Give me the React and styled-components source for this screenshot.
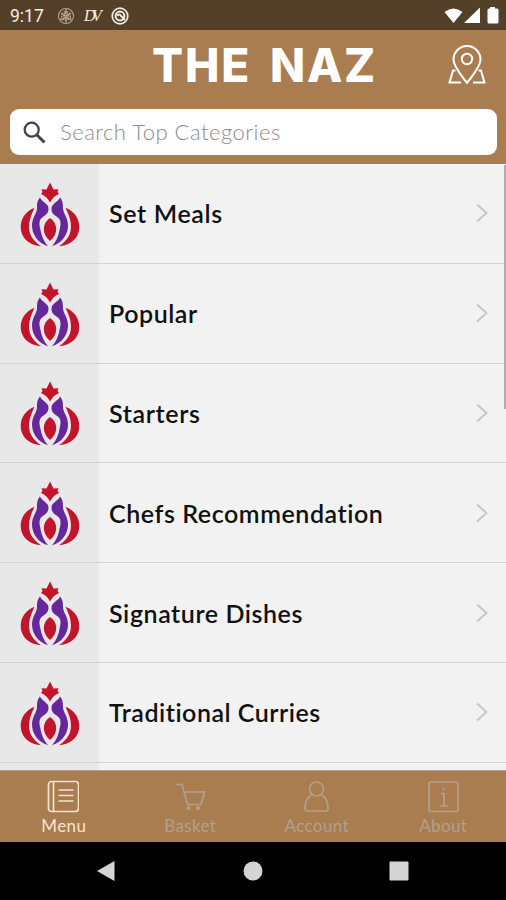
import React from "react";
import styled, { createGlobalStyle } from "styled-components";

const categories = [
  { name: "Set Meals", spacing: 0.65 },
  { name: "Popular", spacing: 0.55 },
  { name: "Starters", spacing: 0.65 },
  { name: "Chefs Recommendation", spacing: 0.57 },
  { name: "Signature Dishes", spacing: 0.57 },
  { name: "Traditional Curries", spacing: 0.52 },
  { name: "", spacing: 0 },
];

const GlobalStyle = createGlobalStyle`
  * {
    box-sizing: border-box;
  }
  body {
    margin: 0;
    font-family: Lato, sans-serif;
  }
`;

const Logo = () => (
  <svg width="60" height="68" viewBox="0 0 60 68">
    <g fill="#c4142b">
      <path d="M30 0.500 L33.500 7.500 L38.500 7.300 L37.500 10 L39 12 C35 13.500 32 16.500 30 20.500 C28 16.500 25 13.500 21 12 L22.500 10 L21.500 7.300 L26.500 7.500Z" />
      <path d="M14.500 25.700 C5 29.500 0.700 37 0.700 45 C0.700 55 8 63 21 64.300 C12 58 9 52 9 44.500 C9 38 11.500 32 14.500 25.700Z" />
      <path d="M45.500 25.700 C55 29.500 59.300 37 59.300 45 C59.300 55 52 63 39 64.300 C48 58 51 52 51 44.500 C51 38 48.500 32 45.500 25.700Z" />
      <path d="M30 36 C22 41 21.500 52 30 59 C38.500 52 38 41 30 36Z" />
    </g>
    <g fill="#67279c">
      <path d="M20 15.500 C21.500 19 25 20 28 24 C29.500 29 27.500 32 23.500 34.500 C18.500 37.500 19 42 20.500 48 C21.500 54 24 60 28 64.300 C17.500 61 11.800 52 12 43 C12.200 35 17 31.500 17 26 C17 21 17.500 18.500 20 15.500Z" />
      <path d="M40 15.500 C38.500 19 35 20 32 24 C30.500 29 32.500 32 36.500 34.500 C41.500 37.500 41 42 39.500 48 C38.500 54 36 60 32 64.300 C42.500 61 48.200 52 48 43 C47.800 35 43 31.500 43 26 C43 21 42.500 18.500 40 15.500Z" />
    </g>
  </svg>
);

const MapPin = () => (
  <svg width="38" height="40" viewBox="0 0 38 40" fill="none" stroke="#fff" strokeWidth="2">
    <path d="M19 38 C14 31 5.500 22 5.500 14.500 A13.500 13.500 0 0 1 32.500 14.500 C32.500 22 24 31 19 38Z" />
    <circle cx="19" cy="14" r="5.200" />
    <path d="M7.500 25.500 H5 L1.500 37.500 H13 M30.500 25.500 H33 L36.500 37.500 H25" />
  </svg>
);

const tabIcons = {
  Menu: (
    <>
      <rect x="1.500" y="1.500" width="30" height="30" rx="3" />
      <path d="M6.500 2 V31 M11.500 10 H26.500 M11.500 15.500 H26.500 M11.500 21 H26.500" />
    </>
  ),
  Basket: (
    <>
      <path d="M1.500 4.500 H8 L13.500 24.500 H27 L30.500 12 H10.500" />
      <circle cx="14.500" cy="28" r="1.200" />
      <circle cx="24" cy="28" r="1.200" />
    </>
  ),
  Account: (
    <>
      <circle cx="16.500" cy="9" r="7" />
      <path d="M11.500 15 C7 17.500 5 22 5 28.500 Q5 31 7.500 31 H25.500 Q28 31 28 28.500 C28 22 26 17.500 21.500 15" />
    </>
  ),
  About: (
    <>
      <rect x="2" y="2" width="29" height="29.500" rx="2" />
      <path d="M14 13.500 H17 V26 M13 26 H20.500 M16.500 7.500 V10" />
    </>
  ),
};

const App = () => (
  <Screen>
    <GlobalStyle />
    <StatusBar>
      <Time>9:17</Time>
      <StatusIcons>
        <svg width="18" height="18" viewBox="0 0 18 18" fill="none" stroke="#b3a496" strokeWidth="1.1">
          <circle cx="9" cy="9" r="7.500" />
          <circle cx="9" cy="9" r="4.500" strokeDasharray="2 1" />
          <path d="M9 2 V16 M3 12 H15 M4 6 L14 13 M14 6 L4 13 M9 4 L6 9 H12Z" />
        </svg>
        <Initials>DV</Initials>
        <svg width="18" height="18" viewBox="0 0 18 18" fill="none" stroke="#f3ece6">
          <circle cx="9" cy="9" r="7.800" strokeWidth="1.700" />
          <circle cx="9" cy="9" r="4.400" strokeWidth="2" />
          <path d="M6 8.500 Q9 6.500 10 9 L14 13" strokeWidth="2" />
        </svg>
      </StatusIcons>
      <svg width="56" height="18" viewBox="0 0 56 18" fill="#fff">
        <path d="M0.500 5 Q9.500 -2 18.500 5 L9.500 16Z" />
        <path d="M20 16 L36 0.500 V16Z" />
        <path d="M46 0 H51 V1.500 H53 Q54.500 1.500 54.500 3 V15 Q54.500 16.500 53 16.500 H45 Q43.500 16.500 43.500 15 V3 Q43.500 1.500 45 1.500 H46Z" />
      </svg>
    </StatusBar>

    <Header>
      <TitleRow>
        <Title>THE NAZ</Title>
        <MapPin />
      </TitleRow>
      <Search>
        <svg width="23" height="23" viewBox="0 0 23 23" fill="none" stroke="#454545">
          <circle cx="8.700" cy="8.700" r="7" strokeWidth="2.300" />
          <path d="M14 14 L21.500 21.500" strokeWidth="3" />
        </svg>
        <Placeholder>Search Top Categories</Placeholder>
      </Search>
    </Header>

    <List>
      {categories.map((c, i) => (
        <Row key={i}>
          <Thumb>
            <Logo />
          </Thumb>
          <Name $spacing={c.spacing}>{c.name}</Name>
          <svg width="14" height="20" viewBox="0 0 14 20" fill="none" stroke="#c5c5c5" strokeWidth="1.8">
            <path d="M2 1.500 L11.500 10 L2 18.500" />
          </svg>
        </Row>
      ))}
      <ScrollThumb />
    </List>

    <TabBar>
      {Object.keys(tabIcons).map((name) => (
        <Tab key={name} $active={name === "Menu"}>
          <svg width="32" height="33" viewBox="0 0 32 33" fill="none" stroke="currentColor" strokeWidth="1.7">
            {tabIcons[name]}
          </svg>
          <TabLabel>{name}</TabLabel>
        </Tab>
      ))}
    </TabBar>

    <NavBar>
      <svg width="20" height="22" viewBox="0 0 20 22">
        <path d="M1 11 L18.500 1 V21Z" fill="#d5d5d5" />
      </svg>
      <svg width="20" height="20" viewBox="0 0 20 20">
        <circle cx="10" cy="10" r="9.500" fill="#d5d5d5" />
      </svg>
      <svg width="20" height="20" viewBox="0 0 20 20">
        <rect x="0.500" y="0.500" width="19" height="19" rx="1" fill="#d5d5d5" />
      </svg>
    </NavBar>
  </Screen>
);

export default App;

const Screen = styled.div`
  width: 506px;
  height: 900px;
  display: flex;
  flex-direction: column;
  overflow: hidden;
  background: #f2f2f2;
`;

const StatusBar = styled.div`
  height: 30px;
  flex: none;
  display: flex;
  align-items: center;
  padding: 1px 6px 0 10px;
  background: #543f28;
`;

const Time = styled.div`
  width: 47px;
  font: 17.5px Roboto, sans-serif;
  color: #f3ece6;
`;

const StatusIcons = styled.div`
  flex: 1;
  display: flex;
  align-items: center;
  gap: 9px;
`;

const Initials = styled.div`
  width: 18px;
  font: italic 16px "Liberation Serif", serif;
  letter-spacing: -3.5px;
  color: #f3ece6;
  white-space: nowrap;
`;

const Header = styled.div`
  height: 134px;
  flex: none;
  padding: 0 9px 0 10px;
  background: #a97d50;
`;

const TitleRow = styled.div`
  height: 79px;
  display: flex;
  align-items: center;
  justify-content: space-between;
  padding: 0 11px 10px 142px;
`;

const Title = styled.h1`
  margin: 0;
  font-family: Inter, sans-serif;
  font-size: 46px;
  font-weight: 800;
  line-height: 60px;
  letter-spacing: 1.8px;
  word-spacing: 7px;
  white-space: nowrap;
  color: #fff;
`;

const Search = styled.div`
  height: 46px;
  display: flex;
  align-items: center;
  gap: 13px;
  padding-left: 13px;
  border-radius: 9px;
  background: #fff;
`;

const Placeholder = styled.div`
  padding: 0 0 2px 1px;
  font-size: 22px;
  font-weight: 300;
  letter-spacing: 0.5px;
  color: #8c8c8c;
`;

const List = styled.div`
  position: relative;
  height: 607px;
  flex: none;
  overflow: hidden;
  border-bottom: 1px solid #a8a09a;
`;

const Row = styled.div`
  height: 99.8px;
  display: flex;
  align-items: center;
  padding-right: 17px;
  border-bottom: 1.5px solid #d3d3d3;
`;

const Thumb = styled.div`
  width: 99px;
  height: 100%;
  display: flex;
  align-items: center;
  justify-content: center;
  padding-top: 5px;
  background: #e8e8e8;
`;

const Name = styled.div`
  flex: 1;
  padding-left: 10px;
  font-size: 25px;
  font-weight: 600;
  letter-spacing: ${(p) => p.$spacing}px;
  white-space: nowrap;
  color: #111;
`;

// overlay scroll indicator on the right edge of the list
const ScrollThumb = styled.div`
  position: absolute;
  top: 1px;
  right: 0;
  width: 2px;
  height: 244px;
  background: #adadad;
`;

const TabBar = styled.div`
  height: 71px;
  flex: none;
  display: grid;
  grid-template-columns: repeat(4, 1fr);
  background: #a97d50;
`;

const Tab = styled.div`
  display: flex;
  flex-direction: column;
  align-items: center;
  padding-top: 9px;
  color: ${(p) => (p.$active ? "#f5e3cf" : "#b2a08c")};
`;

const TabLabel = styled.div`
  margin-top: 2px;
  padding-left: 1px;
  font-size: 17px;
  line-height: 22px;
  letter-spacing: 0.4px;
`;

const NavBar = styled.div`
  flex: 1;
  display: flex;
  justify-content: space-between;
  align-items: center;
  padding: 0 97px 0 96px;
  background: #000;
`;
